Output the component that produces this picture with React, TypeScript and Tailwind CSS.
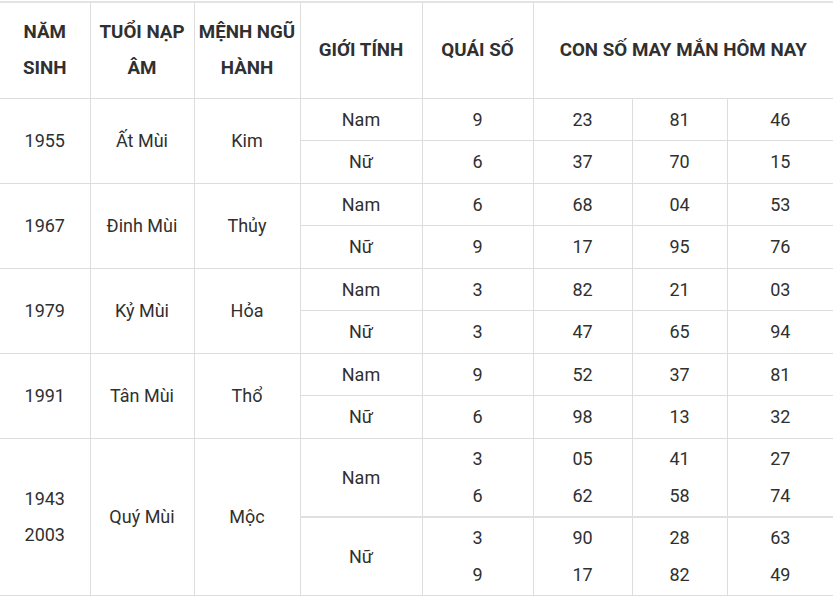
import React from "react";

type Row = {
  year: string[];
  tuoi: string;
  menh: string;
  subs: { g: string; q: string[]; n: string[][] }[];
  double?: boolean;
};

const rows: Row[] = [
  { year: ["1955"], tuoi: "Ất Mùi", menh: "Kim", subs: [
    { g: "Nam", q: ["9"], n: [["23"], ["81"], ["46"]] },
    { g: "Nữ", q: ["6"], n: [["37"], ["70"], ["15"]] },
  ] },
  { year: ["1967"], tuoi: "Đinh Mùi", menh: "Thủy", subs: [
    { g: "Nam", q: ["6"], n: [["68"], ["04"], ["53"]] },
    { g: "Nữ", q: ["9"], n: [["17"], ["95"], ["76"]] },
  ] },
  { year: ["1979"], tuoi: "Kỷ Mùi", menh: "Hỏa", subs: [
    { g: "Nam", q: ["3"], n: [["82"], ["21"], ["03"]] },
    { g: "Nữ", q: ["3"], n: [["47"], ["65"], ["94"]] },
  ] },
  { year: ["1991"], tuoi: "Tân Mùi", menh: "Thổ", subs: [
    { g: "Nam", q: ["9"], n: [["52"], ["37"], ["81"]] },
    { g: "Nữ", q: ["6"], n: [["98"], ["13"], ["32"]] },
  ] },
  { year: ["1943", "2003"], tuoi: "Quý Mùi", menh: "Mộc", double: true, subs: [
    { g: "Nam", q: ["3", "6"], n: [["05", "62"], ["41", "58"], ["27", "74"]] },
    { g: "Nữ", q: ["3", "9"], n: [["90", "17"], ["28", "82"], ["63", "49"]] },
  ] },
];

const cell = "border border-[#dddddd] text-center align-middle p-0";
const hcell = cell + " text-[18.75px] leading-[36px]";

function Lines({ v, lh = "leading-[37px]" }: { v: string[]; lh?: string }) {
  return (
    <div className="flex flex-col items-center">
      {v.map((x, i) => (
        <span key={i} className={lh}>{x}</span>
      ))}
    </div>
  );
}

export default function App() {
  return (
    <div className="bg-white w-[833px] h-[597px] overflow-hidden pt-px" style={{ fontFamily: "Roboto, 'Liberation Sans', sans-serif" }}>
      <table className="border-collapse table-fixed w-[833px] text-[18px] text-[#303030] border-t-2 border-t-[#e3e3e3]">
        <colgroup>
          <col className="w-[90px]" />
          <col className="w-[104px]" />
          <col className="w-[106px]" />
          <col className="w-[122px]" />
          <col className="w-[111px]" />
          <col className="w-[99px]" />
          <col className="w-[95px]" />
          <col className="w-[106px]" />
        </colgroup>
        <thead>
          <tr className="h-[96px] font-bold">
            <th className={hcell + " border-l-0"}>NĂM<br />SINH</th>
            <th className={hcell}>TUỔI NẠP<br />ÂM</th>
            <th className={hcell}>MỆNH NGŨ<br />HÀNH</th>
            <th className={hcell}>GIỚI TÍNH</th>
            <th className={hcell}>QUÁI SỐ</th>
            <th className={hcell + " border-r-0"} colSpan={3}>CON SỐ MAY MẮN HÔM NAY</th>
          </tr>
        </thead>
        <tbody>
          {rows.map((r, ri) =>
            r.subs.map((s, si) => (
              <tr key={ri + "-" + si} className={r.double ? (si === 0 ? "h-[79px]" : "h-[78px]") : si === 0 ? "h-[42px]" : "h-[43px]"}>
                {si === 0 && (
                  <>
                    <td rowSpan={2} className={cell + " border-l-0"}>
                      <Lines v={r.year} lh="leading-[36px]" />
                    </td>
                    <td rowSpan={2} className={cell}>{r.tuoi}</td>
                    <td rowSpan={2} className={cell}>{r.menh}</td>
                  </>
                )}
                <td className={cell + (r.double && si === 1 ? " border-t-2 border-t-[#e0e0e0]" : "")}>{s.g}</td>
                <td className={cell + (r.double && si === 1 ? " border-t-2 border-t-[#e0e0e0]" : "")}>
                  <Lines v={s.q} />
                </td>
                {s.n.map((n, ni) => (
                  <td key={ni} className={cell + (ni === 2 ? " border-r-0" : "") + (r.double && si === 1 ? " border-t-2 border-t-[#e0e0e0]" : "")}>
                    <Lines v={n} />
                  </td>
                ))}
              </tr>
            ))
          )}
        </tbody>
      </table>
    </div>
  );
}
